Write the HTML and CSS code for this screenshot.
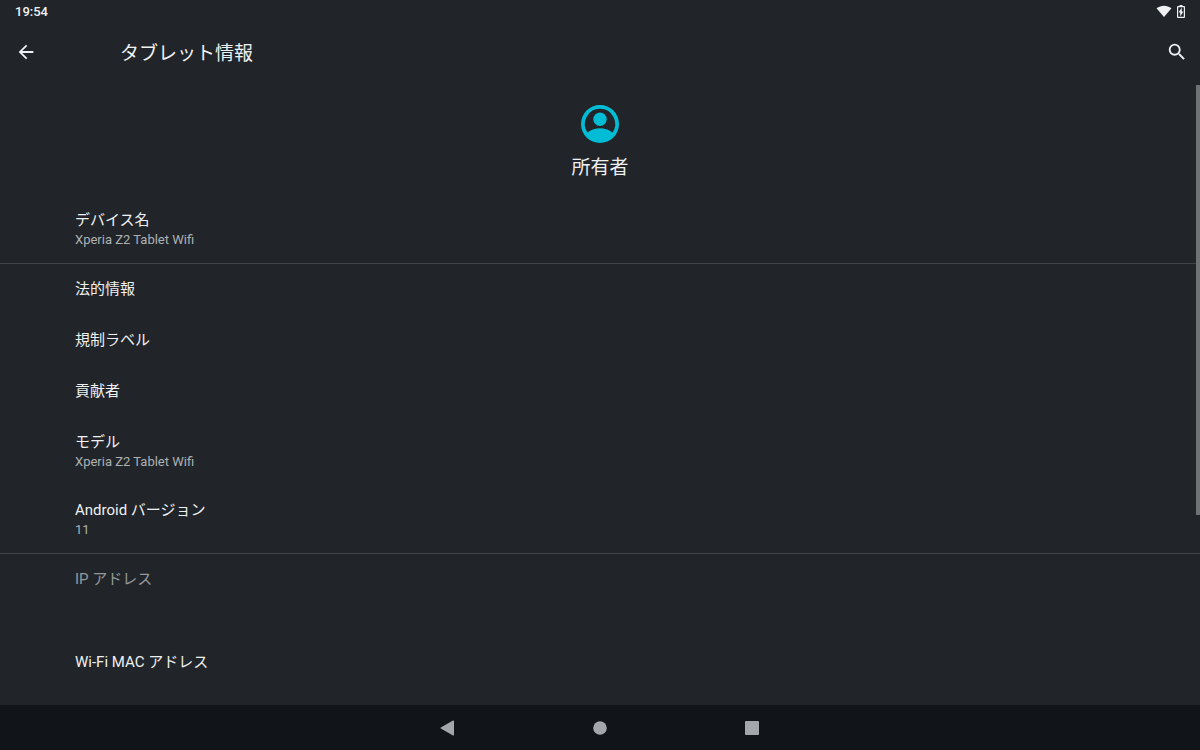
FILE: index.html
```html
<!DOCTYPE html>
<html lang="ja">
<head>
<meta charset="utf-8">
<meta name="viewport" content="width=device-width, initial-scale=1">
<title>タブレット情報</title>
<link rel="stylesheet" href="styles.css">
</head>
<body>
<div class="screen">
  <div class="status-bar">
    <time class="clock">19:54</time>
    <div class="status-icons">
      <svg class="wifi" viewBox="0 0 16 12" aria-hidden="true"><path d="M.5 3.200C5-.2 11-.2 15.500 3.200L8 12Z"/></svg>
      <svg class="battery" viewBox="0 0 8 13" aria-hidden="true"><path fill-rule="evenodd" d="M2.500 0h3v1H7q1 0 1 1v10q0 1-1 1H1q-1 0-1-1V2q0-1 1-1h1.500ZM1.200 2.200v9.600h5.600V2.200Z"/><path d="M4.800 2.500 1.500 7.600h1.700v3.900L6.500 6.400H4.800Z"/></svg>
    </div>
  </div>
  <header class="app-bar">
    <button class="icon-button" type="button" aria-label="戻る">
      <svg class="icon" viewBox="0 0 24 24" aria-hidden="true"><path d="M20 11H7.830l5.590-5.590L12 4l-8 8 8 8 1.410-1.410L7.830 13H20v-2z"/></svg>
    </button>
    <h1 class="app-title">タブレット情報</h1>
    <button class="icon-button" type="button" aria-label="検索">
      <svg class="icon" viewBox="0 0 24 24" aria-hidden="true"><path d="M15.500 14h-.79l-.28-.27A6.471 6.471 0 0 0 16 9.500 6.500 6.500 0 1 0 9.500 16c1.610 0 3.090-.59 4.230-1.570l.27.28v.79l5 4.990L20.490 19l-4.990-5zm-6 0C7.010 14 5 11.990 5 9.500S7.010 5 9.500 5 14 7.010 14 9.500 11.990 14 9.500 14z"/></svg>
    </button>
  </header>
  <main class="content">
    <section class="owner">
      <svg class="avatar" viewBox="0 0 38 38" aria-hidden="true">
        <path fill-rule="evenodd" d="M19 0a19 19 0 1 0 0 38 19 19 0 0 0 0-38Zm0 3.800A15.200 15.200 0 0 1 31.500 27.600C28.200 24.700 23.300 23.200 19 23.200S9.800 24.700 6.500 27.600A15.200 15.200 0 0 1 19 3.800Z"/>
        <circle cx="19" cy="14.200" r="6.700"/>
      </svg>
      <h2 class="owner-name">所有者</h2>
    </section>
    <ul class="group">
      <li class="row"><span class="label">デバイス名</span><span class="value">Xperia Z2 Tablet Wifi</span></li>
    </ul>
    <ul class="group">
      <li class="row"><span class="label">法的情報</span></li>
      <li class="row"><span class="label">規制ラベル</span></li>
      <li class="row"><span class="label">貢献者</span></li>
      <li class="row"><span class="label">モデル</span><span class="value">Xperia Z2 Tablet Wifi</span></li>
      <li class="row"><span class="label">Android バージョン</span><span class="value">11</span></li>
    </ul>
    <ul class="group">
      <li class="row disabled"><span class="label">IP アドレス</span><span class="value blank"></span></li>
      <li class="row"><span class="label">Wi-Fi MAC アドレス</span></li>
    </ul>
    <div class="scroll-thumb"></div>
  </main>
  <nav class="nav-bar" aria-label="システム">
    <button class="nav-button" type="button" aria-label="戻る"><svg class="nav-icon" viewBox="0 0 16 16" aria-hidden="true"><path d="M.8 7.400 13 .5q1-.4 1 .6v13.800q0 1-1 .6L.8 8.600q-.8-.6 0-1.200Z"/></svg></button>
    <button class="nav-button" type="button" aria-label="ホーム"><svg class="nav-icon" viewBox="0 0 16 16" aria-hidden="true"><circle cx="8" cy="8" r="6.800"/></svg></button>
    <button class="nav-button" type="button" aria-label="最近使ったアプリ"><svg class="nav-icon" viewBox="0 0 16 16" aria-hidden="true"><rect x="1" y="1" width="14" height="14" rx="1"/></svg></button>
  </nav>
</div>
</body>
</html>
```
FILE: styles.css
```css
* {
  box-sizing: border-box;
}

body {
  margin: 0;
  background: #212529;
  color: #eef0f2;
  font-family: Roboto, "Noto Sans CJK JP", sans-serif;
}

button {
  display: flex;
  align-items: center;
  justify-content: center;
  padding: 0;
  border: 0;
  background: none;
  color: inherit;
}

svg {
  display: block;
  fill: currentColor;
}

.screen {
  display: flex;
  flex-direction: column;
  height: 100vh;
}

.status-bar {
  display: flex;
  align-items: center;
  justify-content: space-between;
  height: 24px;
  padding: 0 15px 2px;
}

.clock {
  font-size: 13px;
  font-weight: 500;
}

.status-icons {
  display: flex;
  align-items: center;
  gap: 5px;
}

.wifi {
  width: 16px;
  height: 12px;
}

.battery {
  width: 8px;
  height: 13px;
}

.app-bar {
  display: flex;
  align-items: center;
  height: 58px;
  padding: 0 7px 2px;
}

.icon-button {
  width: 38px;
  height: 38px;
}

.icon {
  width: 22px;
  height: 22px;
}

.app-bar .icon-button:last-child {
  width: 32px;
}

.app-title {
  flex: 1;
  margin: 0;
  padding: 3px 0 0 75px;
  font-size: 19px;
  font-weight: 400;
  line-height: 28px;
}

.content {
  position: relative;
  flex: 1;
  min-height: 0;
  overflow: hidden;
}

.owner {
  display: flex;
  flex-direction: column;
  align-items: center;
  gap: 11px;
  padding: 23px 0 13px;
}

.avatar {
  width: 38px;
  height: 38px;
  color: #00bcd4;
}

.owner-name {
  margin: 0;
  font-size: 19px;
  font-weight: 400;
  line-height: 28px;
}

.group {
  margin: 0;
  padding: 0;
  list-style: none;
}

.group + .group {
  border-top: 1px solid #414448;
}

.row {
  display: flex;
  flex-direction: column;
  padding: 15px 75px;
}

.label {
  font-size: 15px;
  line-height: 21px;
}

.value {
  color: #aeb1b4;
  font-size: 13px;
  line-height: 17px;
}

.disabled .label {
  color: #96999c;
}

.blank {
  height: 32px;
}

.scroll-thumb {
  position: absolute;
  top: 3px;
  right: 0;
  width: 4px;
  height: 69%;
  background: #6f7275;
}

.nav-bar {
  display: flex;
  align-items: center;
  justify-content: center;
  gap: 104px;
  height: 45px;
  background: #111418;
  color: #a3a6aa;
}

.nav-button {
  width: 48px;
  height: 45px;
}

.nav-icon {
  width: 16px;
  height: 16px;
}
```
